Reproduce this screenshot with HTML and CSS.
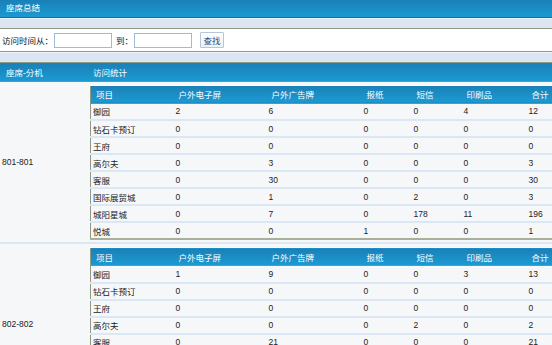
FILE: index.html
```html
<!DOCTYPE html>
<html lang="zh-CN">
<head>
    <meta charset="UTF-8">
    <title>座席总结</title>
    <link rel="stylesheet" href="styles.css">
</head>
<body>
    <div class="panel">
        <div class="panel-title">座席总结</div>
        <div class="band"></div>
        <form class="search">
            <label for="from">访问时间从：</label>
            <input type="text" id="from" name="from">
            <label for="to" class="to-label">到：</label>
            <input type="text" id="to" name="to">
            <button type="button">查找</button>
        </form>
        <div class="band"></div>

        <table class="summary">
            <thead>
                <tr>
                    <th class="ext-col">座席-分机</th>
                    <th>访问统计</th>
                </tr>
            </thead>
            <tbody>
                <tr>
                    <td class="ext">801-801</td>
                    <td class="stats-cell">
                        <table class="stats">
                            <colgroup>
                                <col class="c-name"><col class="c-screen"><col class="c-board">
                                <col class="c-paper"><col class="c-sms"><col class="c-print"><col>
                            </colgroup>
                            <tr><th>项目</th><th>户外电子屏</th><th>户外广告牌</th><th>报纸</th><th>短信</th><th>印刷品</th><th>合计</th></tr>
                            <tr><td>御园</td><td>2</td><td>6</td><td>0</td><td>0</td><td>4</td><td>12</td></tr>
                            <tr><td>钻石卡预订</td><td>0</td><td>0</td><td>0</td><td>0</td><td>0</td><td>0</td></tr>
                            <tr><td>王府</td><td>0</td><td>0</td><td>0</td><td>0</td><td>0</td><td>0</td></tr>
                            <tr><td>高尔夫</td><td>0</td><td>3</td><td>0</td><td>0</td><td>0</td><td>3</td></tr>
                            <tr><td>客服</td><td>0</td><td>30</td><td>0</td><td>0</td><td>0</td><td>30</td></tr>
                            <tr><td>国际展贸城</td><td>0</td><td>1</td><td>0</td><td>2</td><td>0</td><td>3</td></tr>
                            <tr><td>城阳星城</td><td>0</td><td>7</td><td>0</td><td>178</td><td>11</td><td>196</td></tr>
                            <tr><td>悦城</td><td>0</td><td>0</td><td>1</td><td>0</td><td>0</td><td>1</td></tr>
                        </table>
                    </td>
                </tr>
                <tr>
                    <td class="ext">802-802</td>
                    <td class="stats-cell">
                        <table class="stats">
                            <colgroup>
                                <col class="c-name"><col class="c-screen"><col class="c-board">
                                <col class="c-paper"><col class="c-sms"><col class="c-print"><col>
                            </colgroup>
                            <tr><th>项目</th><th>户外电子屏</th><th>户外广告牌</th><th>报纸</th><th>短信</th><th>印刷品</th><th>合计</th></tr>
                            <tr><td>御园</td><td>1</td><td>9</td><td>0</td><td>0</td><td>3</td><td>13</td></tr>
                            <tr><td>钻石卡预订</td><td>0</td><td>0</td><td>0</td><td>0</td><td>0</td><td>0</td></tr>
                            <tr><td>王府</td><td>0</td><td>0</td><td>0</td><td>0</td><td>0</td><td>0</td></tr>
                            <tr><td>高尔夫</td><td>0</td><td>0</td><td>0</td><td>2</td><td>0</td><td>2</td></tr>
                            <tr><td>客服</td><td>0</td><td>21</td><td>0</td><td>0</td><td>0</td><td>21</td></tr>
                            <tr><td>国际展贸城</td><td>0</td><td>0</td><td>0</td><td>0</td><td>0</td><td>0</td></tr>
                            <tr><td>城阳星城</td><td>0</td><td>4</td><td>0</td><td>56</td><td>2</td><td>62</td></tr>
                            <tr><td>悦城</td><td>0</td><td>0</td><td>0</td><td>0</td><td>0</td><td>0</td></tr>
                        </table>
                    </td>
                </tr>
            </tbody>
        </table>
    </div>
</body>
</html>
```

FILE: styles.css
```css
/* General Reset */
* {
    box-sizing: border-box;
    margin: 0;
    padding: 0;
}

body {
    background-color: #fff;
    font-family: "Liberation Sans", "Noto Sans CJK SC", sans-serif;
    font-size: 8.5px;
    color: #222;
    overflow: hidden;
}

/* Blue title bars */
.panel-title,
.summary thead th,
.stats th {
    background: linear-gradient(#1a80b6, #1b9ad3);
    color: #fff;
    font-weight: normal;
    text-align: left;
}

.panel-title {
    height: 18px;
    line-height: 17px;
    padding-left: 6px;
    border-bottom: 1px solid #176e9c;
}

/* Light strips between sections */
.band {
    height: 11px;
    background-color: #dce6f3;
    border-top: 1px solid #eef3fa;
    border-bottom: 1px solid #8e9a86;
}

/* Search form */
.search {
    display: flex;
    align-items: center;
    height: 23px;
    padding-left: 2px;
    border-bottom: 1px solid #8e9a86;
    color: #111;
}

.search input {
    width: 58px;
    height: 15px;
    border: 1px solid #9fbad6;
    font-size: 8.5px;
    margin-left: 1px;
}

.search .to-label {
    margin-left: 4px;
}

.search button {
    margin-left: 8px;
    width: 24px;
    height: 16px;
    border: 1px solid #b7c6d6;
    border-radius: 1px;
    background: linear-gradient(#ffffff, #eef1f4);
    color: #1b4f8c;
    font-size: 8.5px;
    font-family: inherit;
}

/* Outer summary table */
.summary {
    width: 100%;
    border-collapse: collapse;
}

.summary thead th {
    height: 18px;
    padding-left: 6px;
    border-bottom: 1px solid #6f8fa3;
}

.summary thead th + th {
    padding-left: 3px;
}

.ext-col {
    width: 90px;
}

.summary tbody td {
    border-bottom: 2px solid #dbe7f4;
    background-color: #f6f7f9;
}

.ext {
    padding-left: 2px;
    vertical-align: middle;
}

.stats-cell {
    padding: 3px 0 2px;
}

/* Inner statistics table */
.stats {
    width: 100%;
    border-collapse: collapse;
    border-top: 1px solid #8e9a86;
    border-left: 1px solid #8e9a86;
    border-bottom: 2px solid #a8b09c;
    background-color: #fff;
}

.stats th {
    height: 18px;
    padding-left: 5px;
    border-top: 1px solid #fff;
    border-bottom: 1px solid #7f9080;
}

.stats td {
    height: 17px;
    padding-left: 2px;
    border-bottom: 1px solid #c9ddf0;
    background-color: #fff;
}

.stats tr:last-child td {
    border-bottom: none;
}

.c-name { width: 83px; }
.c-screen { width: 93px; }
.c-board { width: 95px; }
.c-paper { width: 50px; }
.c-sms { width: 50px; }
.c-print { width: 65px; }
```
